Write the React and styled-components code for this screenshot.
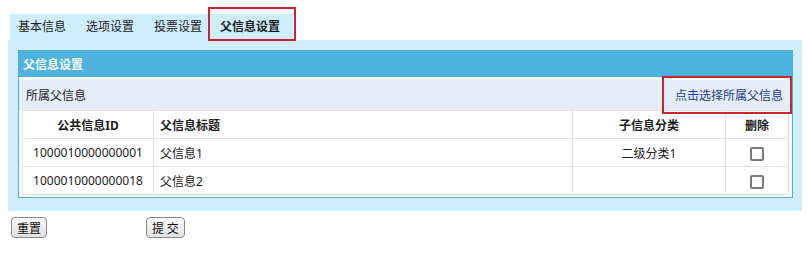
import React from "react";
import styled, { createGlobalStyle } from "styled-components";

const Global = createGlobalStyle`
  html, body { margin: 0; padding: 0; background: #fff; }
  body {
    font-family: "Noto Sans", "Noto Sans CJK SC", sans-serif;
    font-size: 12px;
    color: #222;
  }
`;

const Page = styled.div`
  width: 807px;
  height: 258px;
  padding-top: 14px;
  box-sizing: border-box;
`;

const TabBar = styled.div`
  display: flex;
  align-items: stretch;
  margin-left: 10px;
  width: 283px;
  height: 26px;
  background: #cdeefa;
`;

const Tab = styled.div`
  position: relative;
  display: flex;
  align-items: center;
  padding: ${(p) => (p.$active ? "0 0 0 6px" : "0 8px")};
  margin-right: 4px;
  font-size: 12px;
  line-height: 12px;
  font-weight: ${(p) => (p.$active ? 700 : 400)};
  color: #1c1c1c;
  white-space: nowrap;

  ${(p) =>
    p.$active &&
    `
    &::after {
      content: "";
      position: absolute;
      left: -6px;
      right: -16px;
      top: -7px;
      bottom: -1px;
      border: 2px solid #c9252f;
    }
  `}
`;

const Panel = styled.div`
  margin-left: 8px;
  width: 794px;
  box-sizing: border-box;
  background: #cdeefa;
  padding: 10px 9px 13px 10px;
`;

const Box = styled.div`
  border: 1px solid #5aaccf;
  background: #f5fbfe;
  padding-bottom: 2px;
`;

const BoxHeader = styled.div`
  height: 26px;
  display: flex;
  align-items: center;
  padding-left: 4px;
  background: #4fb4dd;
  color: #fff;
  font-weight: 700;
  font-size: 12px;
`;

const SubRow = styled.div`
  margin-top: 3px;
  height: 30px;
  display: flex;
  align-items: center;
  justify-content: space-between;
  padding: 0 9px 0 7px;
  background: #e4edf8;
  color: #222;
`;

const LinkWrap = styled.span`
  position: relative;
  color: #1d3c8c;
  cursor: pointer;

  &::after {
    content: "";
    position: absolute;
    left: -13px;
    right: -9px;
    top: -10px;
    bottom: -10px;
    border: 2px solid #c9252f;
  }
`;

const Table = styled.table`
  margin: 0 4px 0 3px;
  width: 766px;
  border-collapse: collapse;
  background: #fff;
  table-layout: fixed;
`;

const Th = styled.th`
  height: 27px;
  padding: 0 6px;
  border: 1px solid #e3e3e3;
  font-weight: 700;
  color: #1c1c1c;
  text-align: ${(p) => p.$align || "center"};
`;

const Td = styled.td`
  height: 27px;
  padding: 0 6px;
  border: 1px solid #e3e3e3;
  color: #222;
  text-align: ${(p) => p.$align || "center"};
`;

const Check = styled.span`
  display: inline-block;
  width: 10px;
  height: 10px;
  border: 2px solid #7a7a7a;
  border-radius: 2px;
  background: #fff;
  vertical-align: middle;
`;

const Actions = styled.div`
  display: flex;
  align-items: center;
  margin-top: 6px;
  padding-left: 11px;
`;

const Button = styled.button`
  height: 21px;
  padding: 0 5px;
  margin-left: ${(p) => p.$offset || 0}px;
  font-family: "Noto Sans CJK SC", sans-serif;
  font-size: 12px;
  color: #111;
  border: 1px solid #8a8a8a;
  border-radius: 4px;
  background: linear-gradient(#fafafa, #e2e2e2);
  line-height: 19px;
`;

const rows = [
  { id: "1000010000000001", title: "父信息1", cat: "二级分类1" },
  { id: "1000010000000018", title: "父信息2", cat: "" },
];

export default function App() {
  return (
    <Page>
      <Global />
      <TabBar>
        <Tab>基本信息</Tab>
        <Tab>选项设置</Tab>
        <Tab>投票设置</Tab>
        <Tab $active>父信息设置</Tab>
      </TabBar>
      <Panel>
        <Box>
          <BoxHeader>父信息设置</BoxHeader>
          <SubRow>
            <span>所属父信息</span>
            <LinkWrap>点击选择所属父信息</LinkWrap>
          </SubRow>
          <Table>
            <colgroup>
              <col style={{ width: 131 }} />
              <col style={{ width: 419 }} />
              <col style={{ width: 153 }} />
              <col style={{ width: 63 }} />
            </colgroup>
            <thead>
              <tr>
                <Th>公共信息ID</Th>
                <Th $align="left">父信息标题</Th>
                <Th>子信息分类</Th>
                <Th>删除</Th>
              </tr>
            </thead>
            <tbody>
              {rows.map((r) => (
                <tr key={r.id}>
                  <Td>{r.id}</Td>
                  <Td $align="left">{r.title}</Td>
                  <Td>{r.cat}</Td>
                  <Td>
                    <Check />
                  </Td>
                </tr>
              ))}
            </tbody>
          </Table>
        </Box>
      </Panel>
      <Actions>
        <Button>重置</Button>
        <Button $offset={99}>提 交</Button>
      </Actions>
    </Page>
  );
}
